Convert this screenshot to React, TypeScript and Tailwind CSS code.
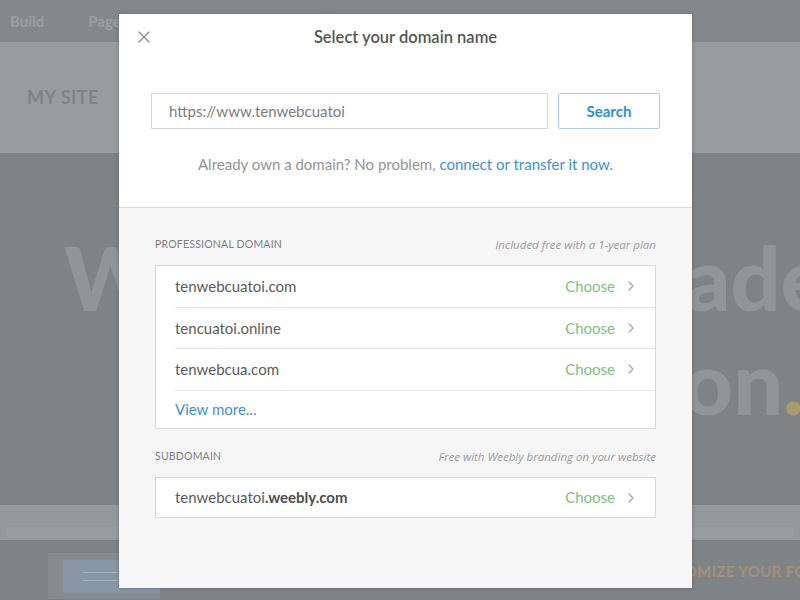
import { ChevronRight, X } from "lucide-react";

const font = { fontFamily: "Lato, 'Liberation Sans', sans-serif" };

const proDomains = ["tenwebcuatoi.com", "tencuatoi.online", "tenwebcua.com"];

export default function App() {
  return (
    <div className="relative h-[600px] w-[800px] overflow-hidden bg-[#808386]" style={font}>
      {/* page behind the overlay */}
      <div className="flex h-[42px] items-center gap-[44px] bg-[#85888b] pl-[10px] text-[15px] font-bold text-[#9b9ea0]">
        <span>Build</span>
        <span>Pages</span>
      </div>
      <div className="flex h-[111px] items-center bg-[#999c9d] pl-[27px] text-[18px] font-bold tracking-wide text-[#808386]">
        MY SITE
      </div>
      <div className="flex h-[352px] flex-col pt-[72px] text-[88px] font-black leading-[104px] text-[#929597]">
        <div className="flex justify-between whitespace-nowrap">
          <span className="ml-[64px]">Welcome</span>
          <span className="mr-[-28px]">made</span>
        </div>
        <div className="flex justify-end whitespace-nowrap">
          <span className="mr-[-4px]">
            on<span className="text-[#a89c6f]">.</span>
          </span>
        </div>
      </div>
      <div className="flex h-[35px] flex-col justify-end bg-[#96999a]">
        <div className="mx-[7px] mb-[2px] h-[11px] bg-[#9a9d9e]" />
      </div>
      <div className="flex h-[60px] items-center gap-4">
        <div className="ml-[48px] mt-[12px] flex h-[46px] w-[112px] items-end bg-[#888b8e] p-[7px_0_6px_15px]">
          <div className="flex h-full w-full flex-col justify-center gap-[7px] bg-[#8896a6] pl-[20px]">
            <div className="h-[1px] w-[60px] bg-[#a5b0bd]" />
            <div className="h-[1px] w-[70px] bg-[#a5b0bd]" />
          </div>
        </div>
        <div className="ml-auto mr-[-37px] mt-[3px] text-[15px] font-bold tracking-wide whitespace-nowrap text-[#a0927a]">
          CUSTOMIZE YOUR FONTS
        </div>
      </div>

      {/* modal */}
      <div className="absolute left-[119px] top-[14px] flex h-[574px] w-[573px] flex-col bg-white shadow-[0_0_4px_rgba(0,0,0,0.25)]">
        <div className="flex h-[194px] flex-col border-b border-[#dddddd] px-8">
          <div className="relative flex h-[46px] items-center justify-center">
            <X className="absolute left-[-17px] top-[13px] h-[20px] w-[20px] text-[#8a8a8a]" strokeWidth={1.5} />
            <h1 className="text-[16.5px] font-semibold text-[#555555]">Select your domain name</h1>
          </div>
          <div className="mt-[33px] flex gap-[10px]">
            <div className="flex h-[36px] flex-1 items-center border border-[#d6d6d6] pl-[17px] text-[15px] text-[#7d7d7d]">
              https://www.tenwebcuatoi
            </div>
            <button className="h-[36px] w-[102px] rounded-[2px] border border-[#a9cdee] text-[15px] font-bold text-[#2d8fdb]">
              Search
            </button>
          </div>
          <p className="mt-[24px] text-center text-[15px] text-[#949494]">
            Already own a domain? No problem, <span className="text-[#3a92d9]">connect or transfer it now.</span>
          </p>
        </div>

        <div className="flex flex-1 flex-col bg-[#f6f6f6] px-9 pt-[29px]">
          <SectionLabel left="PROFESSIONAL DOMAIN" right="Included free with a 1-year plan" />
          <div className="mt-[12px] border border-[#d8d8d8] bg-white pl-[19px]">
            {proDomains.map((d) => (
              <DomainRow key={d}>{d}</DomainRow>
            ))}
            <div className="flex h-[37px] items-center text-[15px] text-[#3a92d9]">View more...</div>
          </div>

          <div className="mt-[20.5px]">
            <SectionLabel left="SUBDOMAIN" right="Free with Weebly branding on your website" />
          </div>
          <div className="mt-[12px] border border-[#d8d8d8] bg-white pl-[19px]">
            <DomainRow last>
              tenwebcuatoi<span className="font-bold text-[#4e4e4e]">.weebly.com</span>
            </DomainRow>
          </div>
        </div>
      </div>
    </div>
  );
}

function SectionLabel({ left, right }: { left: string; right: string }) {
  return (
    <div className="flex h-[16px] items-center justify-between">
      <span className="text-[10.5px] tracking-[0.02em] text-[#7f7f7f]">{left}</span>
      <span className="text-[11.5px] italic text-[#9b9b9b]" style={{ fontFamily: "'Open Sans', sans-serif" }}>
        {right}
      </span>
    </div>
  );
}

function DomainRow({ children, last }: { children: React.ReactNode; last?: boolean }) {
  return (
    <div className={`flex items-center border-[#e6e6e6] pr-[16px] ${last ? "h-[39px]" : "h-[41.5px] border-b"}`}>
      <span className="flex-1 text-[15px] text-[#5b5b5b]">{children}</span>
      <span className="text-[15px] text-[#7cc47a]">Choose</span>
      <ChevronRight className="ml-[8px] h-[16px] w-[16px] text-[#a9a9a9]" strokeWidth={2} />
    </div>
  );
}
